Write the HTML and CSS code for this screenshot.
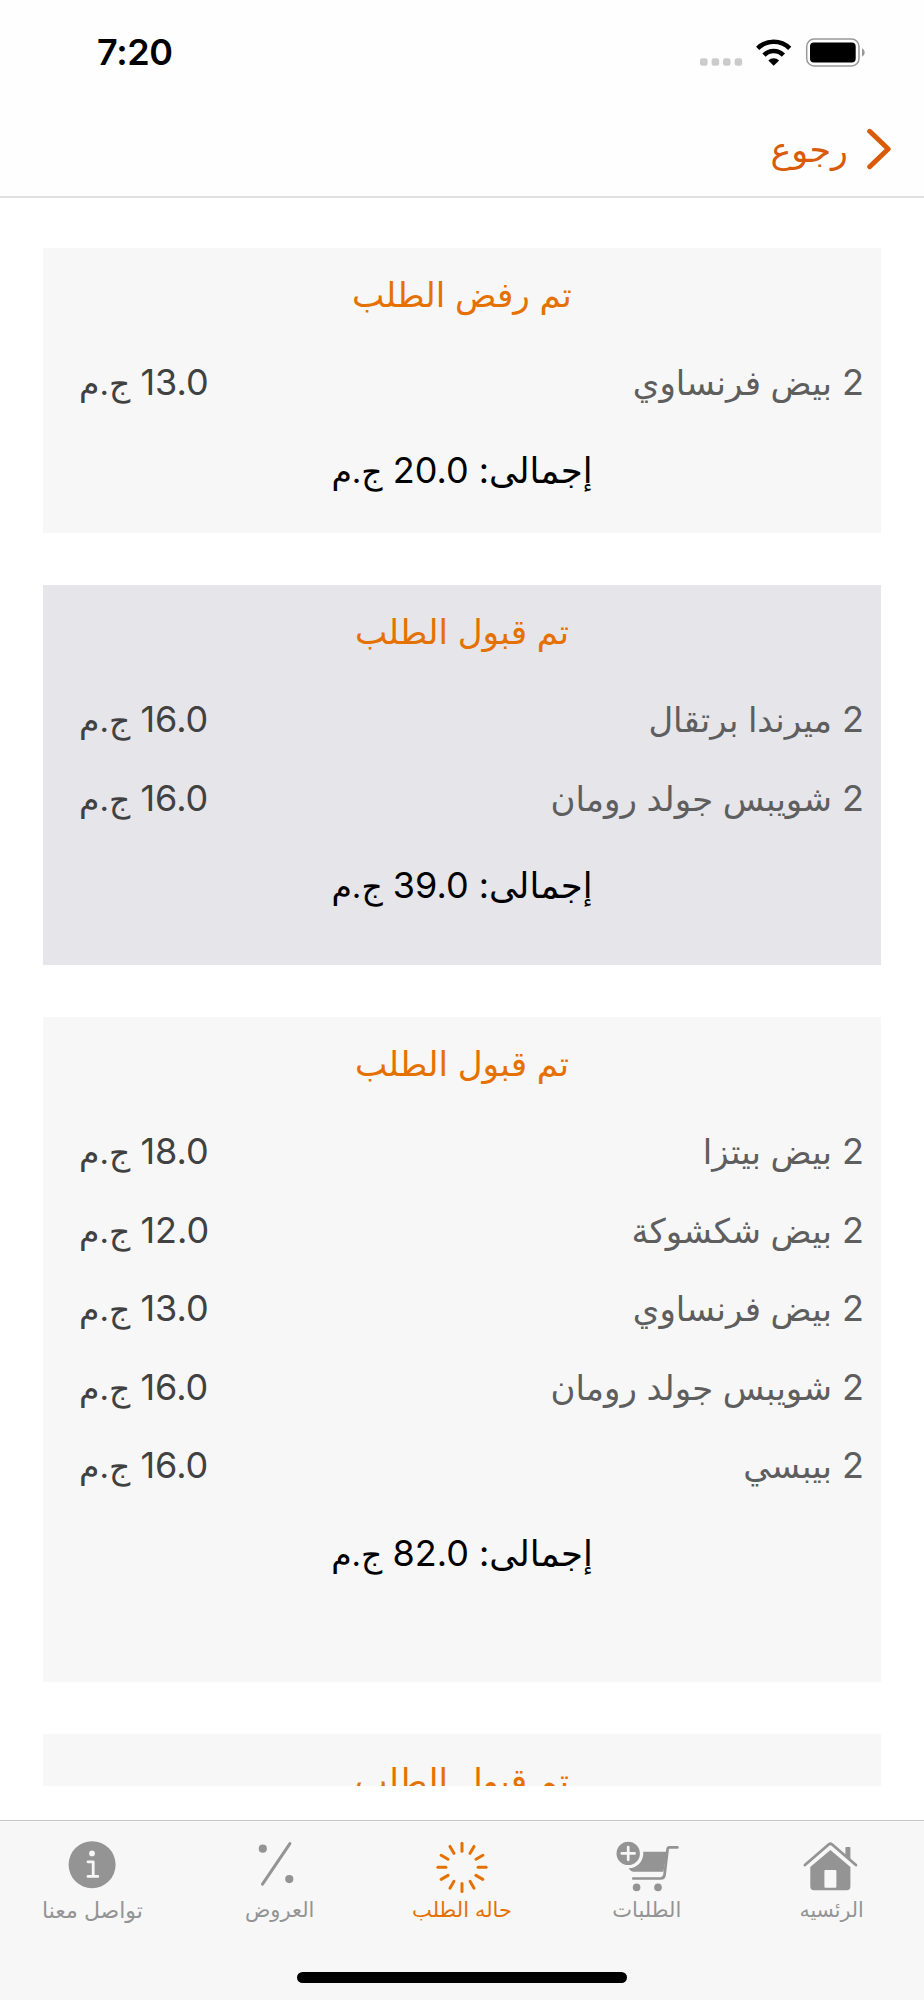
FILE: index.html
```
<!DOCTYPE html>
<html lang="ar" dir="rtl">
  <head>
    <meta charset="utf-8">
    <title>حاله الطلب</title>
    <link rel="stylesheet" href="styles.css">
  </head>
  <body>
    <header class="header">
      <div class="status-bar">
        <span class="time">7:20</span>
        <svg class="status-icons" viewBox="0 0 166 32" width="166" height="32">
          <g fill="#cbcbcb">
            <rect x="0" y="18.2" width="7.6" height="7.6" rx="2.4"/>
            <rect x="11.6" y="18.2" width="7.6" height="7.6" rx="2.4"/>
            <rect x="23" y="18.2" width="7.6" height="7.6" rx="2.4"/>
            <rect x="34.6" y="18.2" width="7.6" height="7.6" rx="2.4"/>
          </g>
          <g fill="none" stroke="#000" stroke-width="4.6">
            <path d="M57.7 8.4a22.6 22.6 0 0 1 32 0"/>
            <path d="M64 15.1a13.6 13.6 0 0 1 19.4 0"/>
          </g>
          <path d="M68.3 20.5a7.8 7.8 0 0 1 10.8 0L73.7 25.8z" fill="#000"/>
          <rect x="106.7" y="-1" width="52.3" height="27" rx="7.5" fill="none" stroke="#999" stroke-width="1.5"/>
          <rect x="110" y="2.4" width="45.7" height="20" rx="4" fill="#000"/>
          <path d="M162 8.2a4.6 4.6 0 0 1 0 8.4z" fill="#999"/>
        </svg>
      </div>
      <a class="back" href="#">
        <svg viewBox="0 0 24 42" width="24" height="42">
          <path d="M2.7 3.3 21.2 21 2.7 38.7" fill="none" stroke="#d95a08" stroke-width="5" stroke-linecap="round" stroke-linejoin="round"/>
        </svg>
        <span>رجوع</span>
      </a>
    </header>

    <main class="orders">
      <section class="order">
        <h2 class="state">تم رفض الطلب</h2>
        <div class="item"><span class="name">2 <span class="ar">بيض فرنساوي</span></span><span class="price">13.0 <span class="currency">ج.م</span></span></div>
        <div class="total"><span class="label">إجمالى:</span> 20.0 <span class="currency">ج.م</span></div>
      </section>

      <section class="order selected">
        <h2 class="state">تم قبول الطلب</h2>
        <div class="item"><span class="name">2 <span class="ar">ميرندا برتقال</span></span><span class="price">16.0 <span class="currency">ج.م</span></span></div>
        <div class="item"><span class="name">2 <span class="ar">شويبس جولد رومان</span></span><span class="price">16.0 <span class="currency">ج.م</span></span></div>
        <div class="total"><span class="label">إجمالى:</span> 39.0 <span class="currency">ج.م</span></div>
      </section>

      <section class="order long">
        <h2 class="state">تم قبول الطلب</h2>
        <div class="item"><span class="name">2 <span class="ar">بيض بيتزا</span></span><span class="price">18.0 <span class="currency">ج.م</span></span></div>
        <div class="item"><span class="name">2 <span class="ar">بيض شكشوكة</span></span><span class="price">12.0 <span class="currency">ج.م</span></span></div>
        <div class="item"><span class="name">2 <span class="ar">بيض فرنساوي</span></span><span class="price">13.0 <span class="currency">ج.م</span></span></div>
        <div class="item"><span class="name">2 <span class="ar">شويبس جولد رومان</span></span><span class="price">16.0 <span class="currency">ج.م</span></span></div>
        <div class="item"><span class="name">2 <span class="ar">بيبسي</span></span><span class="price">16.0 <span class="currency">ج.م</span></span></div>
        <div class="total"><span class="label">إجمالى:</span> 82.0 <span class="currency">ج.م</span></div>
      </section>

      <section class="order">
        <h2 class="state">تم قبول الطلب</h2>
      </section>
    </main>

    <footer class="footer">
      <nav class="tabs">
        <a class="tab home" href="#">
          <svg viewBox="0 0 72 60" width="72" height="60">
            <path d="M49.4 11.8q0-.8.8-.8h3.4q.8 0 .8.8v12.4l-5-4.2z" fill="#949494"/>
            <path d="M8.9 29 32.9 8.3q1.5-1.1 3 0L59.9 29" fill="none" stroke="#949494" stroke-width="2.8" stroke-linecap="round"/>
            <path fill-rule="evenodd" d="M34.4 14 54.4 31v19.5q0 3.7-3.7 3.7H18q-3.7 0-3.7-3.7V31zM29.4 34q-1 0-1 1v15.8q0 1 1 1h10q1 0 1-1V35q0-1-1-1z" fill="#949494"/>
          </svg>
          <span>الرئسيه</span>
        </a>
        <a class="tab" href="#">
          <svg viewBox="0 0 72 60" width="72" height="60">
            <circle cx="17.2" cy="17.4" r="11.7" fill="#949494"/>
            <path d="M10.8 17.4h12.8M17.2 11v12.8" stroke="#f7f7f7" stroke-width="2.7" stroke-linecap="round"/>
            <path d="M32.2 15.7H56l-3.6 20H22.6q-3 0-4.9-3.4A14.8 14.8 0 0 0 32.2 15.7z" fill="#949494"/>
            <path d="M66.4 11.4h-7.9q-1.7 0-1.9 1.7L53.6 38.5q-.5 4-3.8 4H22.2" fill="none" stroke="#949494" stroke-width="2.7" stroke-linecap="round"/>
            <circle cx="25.6" cy="51.4" r="3.8" fill="#949494"/>
            <circle cx="47" cy="51.4" r="3.8" fill="#949494"/>
          </svg>
          <span>الطلبات</span>
        </a>
        <a class="tab active" href="#">
          <svg viewBox="0 0 72 60" width="72" height="60">
            <g stroke="#e57200" stroke-width="3" stroke-linecap="round">
              <path d="M36 7.2v8"/>
              <path d="M36 7.2v8" transform="rotate(30 36 31.3)"/>
              <path d="M36 7.2v8" transform="rotate(60 36 31.3)"/>
              <path d="M36 7.2v8" transform="rotate(90 36 31.3)"/>
              <path d="M36 7.2v8" transform="rotate(120 36 31.3)"/>
              <path d="M36 7.2v8" transform="rotate(150 36 31.3)"/>
              <path d="M36 7.2v8" transform="rotate(180 36 31.3)"/>
              <path d="M36 7.2v8" transform="rotate(210 36 31.3)"/>
              <path d="M36 7.2v8" transform="rotate(240 36 31.3)"/>
              <path d="M36 7.2v8" transform="rotate(270 36 31.3)"/>
              <path d="M36 7.2v8" transform="rotate(300 36 31.3)"/>
              <path d="M36 7.2v8" transform="rotate(330 36 31.3)"/>
            </g>
          </svg>
          <span>حاله الطلب</span>
        </a>
        <a class="tab offers" href="#">
          <svg viewBox="0 0 72 60" width="72" height="60">
            <circle cx="21.8" cy="12.7" r="4.1" fill="#949494"/>
            <circle cx="48.3" cy="43.1" r="4.1" fill="#949494"/>
            <path d="M48.9 7.6 21.5 48.2" stroke="#949494" stroke-width="3" stroke-linecap="round"/>
          </svg>
          <span>العروض</span>
        </a>
        <a class="tab contact" href="#">
          <svg viewBox="0 0 72 60" width="72" height="60">
            <circle cx="36.1" cy="28.7" r="23.5" fill="#949494"/>
            <circle cx="36" cy="17.4" r="2.9" fill="#f7f7f7"/>
            <path d="M32 25.8h5.2v14.6M32 40.4h9.8" fill="none" stroke="#f7f7f7" stroke-width="2.8" stroke-linecap="round" stroke-linejoin="round"/>
          </svg>
          <span>تواصل معنا</span>
        </a>
      </nav>
      <div class="home-indicator"></div>
    </footer>
  </body>
</html>
```

FILE: styles.css
```
* {
  box-sizing: border-box;
}

body {
  margin: 0;
  height: 2000px;
  display: flex;
  flex-direction: column;
  overflow: hidden;
  background-color: #ffffff;
  font-family: Inter, "DejaVu Sans", sans-serif;
  font-size: 36px;
}

a {
  color: inherit;
  text-decoration: none;
}

.header {
  flex: none;
  height: 198px;
  background-color: #fefefe;
  border-bottom: 2px solid #e0e0e0;
}

.status-bar {
  direction: ltr;
  display: flex;
  justify-content: space-between;
  height: 104px;
  padding: 30px 58px 0 97px;
}

.time {
  font-size: 36px;
  font-weight: 600;
  line-height: 44px;
  letter-spacing: -0.4px;
}

.status-icons {
  margin-top: 10px;
  overflow: visible;
}

.back {
  display: flex;
  align-items: center;
  gap: 19px;
  height: 90px;
  padding-right: 33px;
  color: #d95a08;
  font-size: 35px;
}

.orders {
  flex: none;
  height: 1588px;
  padding: 50px 43px 0;
  overflow: hidden;
}

.order {
  height: 285px;
  margin-bottom: 52px;
  background-color: #f7f7f7;
}

.order.selected {
  height: 380px;
  background-color: #e5e5ea;
}

.order.long {
  height: 665px;
}

.state {
  height: 95px;
  margin: 0;
  color: #e57200;
  font-size: 34.3px;
  font-weight: 400;
  line-height: 94px;
  text-align: center;
}

.item {
  display: flex;
  justify-content: space-between;
  height: 78.5px;
  padding: 0 17px 0 36px;
  line-height: 79px;
}

.name {
  color: #5e5e5e;
}

.price {
  color: #414141;
}

.total {
  line-height: 96px;
  text-align: center;
}

.ar {
  font-size: 34px;
}

.label {
  font-size: 35.5px;
}

.currency {
  font-size: 33px;
}

.footer {
  flex: none;
  height: 180px;
  margin-top: 34px;
  background-color: #f7f7f7;
  border-top: 1px solid #c4c4c4;
}

.tabs {
  display: flex;
  height: 151px;
  padding-top: 15px;
}

.tab {
  flex: 1;
  display: flex;
  flex-direction: column;
  align-items: center;
  color: #949494;
  font-size: 21px;
  line-height: 28px;
  white-space: nowrap;
}

.tab.home {
  font-size: 20.5px;
}

.tab.contact {
  font-size: 22px;
}

.tab.active {
  color: #e57200;
}

.tab.offers span {
  padding-left: 5px;
}

.home-indicator {
  width: 330px;
  height: 11px;
  margin: 0 auto;
  border-radius: 6px;
  background-color: #000000;
}
```
